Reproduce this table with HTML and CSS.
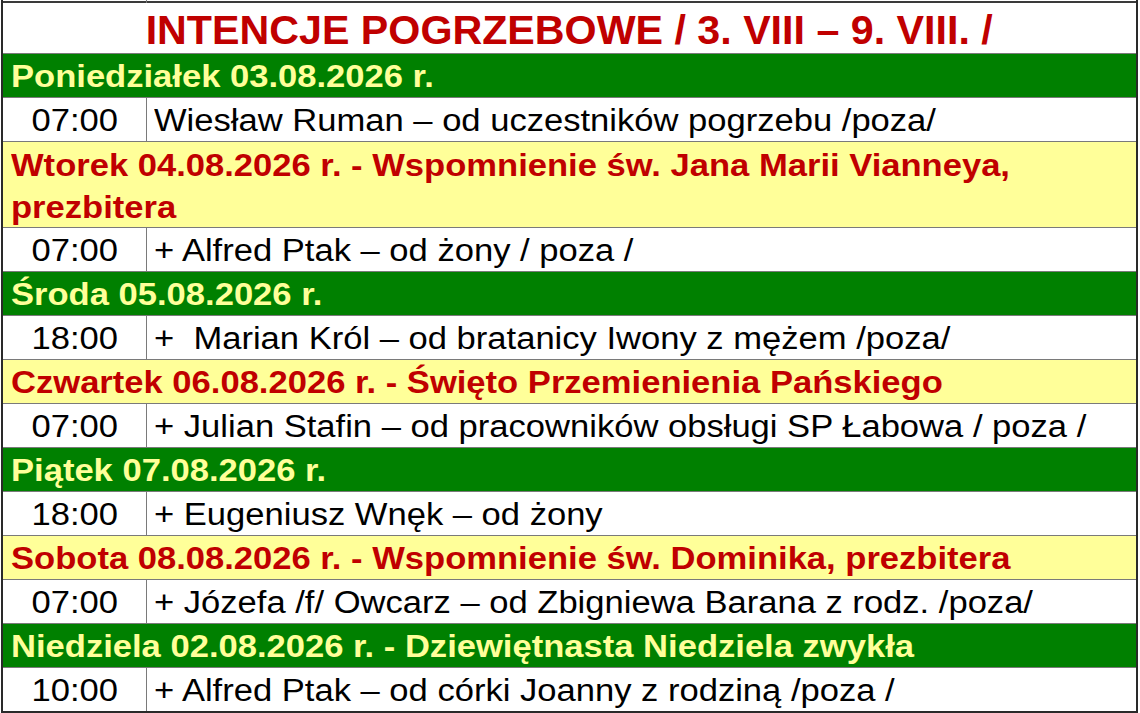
FILE: index.html
```html
<!DOCTYPE html>
<html lang="pl">
<head>
<meta charset="utf-8">
<title>Intencje pogrzebowe</title>
<link rel="stylesheet" href="styles.css">
</head>
<body>
<div class="sheet">
  <div class="row mass cut"><div class="time"></div><div class="text"></div></div>
  <div class="row title"><span class="st">INTENCJE POGRZEBOWE / 3. VIII – 9. VIII. /</span></div>
  <div class="row day green"><span class="s">Poniedziałek 03.08.2026 r.</span></div>
  <div class="row mass"><div class="time"><span class="sc">07:00</span></div><div class="text"><span class="s">Wiesław Ruman – od uczestników pogrzebu /poza/</span></div></div>
  <div class="row day yellow two"><span class="s line">Wtorek 04.08.2026 r. - Wspomnienie św. Jana Marii Vianneya,</span><span class="s line">prezbitera</span></div>
  <div class="row mass"><div class="time"><span class="sc">07:00</span></div><div class="text"><span class="s">+ Alfred Ptak – od żony / poza /</span></div></div>
  <div class="row day green"><span class="s">Środa 05.08.2026 r.</span></div>
  <div class="row mass"><div class="time"><span class="sc">18:00</span></div><div class="text"><span class="s">+&nbsp; Marian Król – od bratanicy Iwony z mężem /poza/</span></div></div>
  <div class="row day yellow"><span class="s">Czwartek 06.08.2026 r. - Święto Przemienienia Pańskiego</span></div>
  <div class="row mass"><div class="time"><span class="sc">07:00</span></div><div class="text"><span class="s">+ Julian Stafin – od pracowników obsługi SP Łabowa / poza /</span></div></div>
  <div class="row day green"><span class="s">Piątek 07.08.2026 r.</span></div>
  <div class="row mass"><div class="time"><span class="sc">18:00</span></div><div class="text"><span class="s">+ Eugeniusz Wnęk – od żony</span></div></div>
  <div class="row day yellow"><span class="s">Sobota 08.08.2026 r. - Wspomnienie św. Dominika, prezbitera</span></div>
  <div class="row mass"><div class="time"><span class="sc">07:00</span></div><div class="text"><span class="s">+ Józefa /f/ Owcarz – od Zbigniewa Barana z rodz. /poza/</span></div></div>
  <div class="row day green"><span class="s">Niedziela 02.08.2026 r. - Dziewiętnasta Niedziela zwykła</span></div>
  <div class="row mass last"><div class="time"><span class="sc">10:00</span></div><div class="text"><span class="s">+ Alfred Ptak – od córki Joanny z rodziną /poza /</span></div></div>
</div>
</body>
</html>
```
FILE: styles.css
```css
html, body {
  margin: 0;
  padding: 0;
  background: #ffffff;
}
body {
  font-family: "Liberation Sans", Arial, sans-serif;
  padding-left: 1px;
}
.sheet {
  width: 1137px;
  box-sizing: border-box;
  border-left: 2px solid #2a2a2a;
  border-right: 2px solid #2a2a2a;
  border-bottom: 2px solid #2a2a2a;
  display: flex;
  flex-direction: column;
}
.row {
  box-sizing: border-box;
  border-bottom: 1px solid #7a7a7a;
  flex: none;
}
.s {
  display: inline-block;
  white-space: nowrap;
  transform: scaleX(1.115);
  transform-origin: left center;
}
.sc {
  display: inline-block;
  white-space: nowrap;
  transform: scaleX(1.115);
  transform-origin: center center;
}
.st {
  display: inline-block;
  white-space: nowrap;
  transform: scaleX(1.03);
  transform-origin: center center;
}
.title {
  height: 51px;
  text-align: center;
  color: #c00000;
  font-weight: bold;
  font-size: 40px;
  line-height: 46px;
  padding-top: 4px;
}
.day {
  height: 44px;
  padding: 3px 6px 0 8px;
  font-weight: bold;
  font-size: 31px;
  line-height: 40px;
}
.day.two {
  height: 86px;
  display: flex;
  flex-direction: column;
  align-items: flex-start;
  line-height: 41.5px;
}
.green {
  background: #008000;
  color: #ffff99;
}
.yellow {
  background: #ffff99;
  color: #c00000;
}
.mass {
  display: grid;
  grid-template-columns: 144px 1fr;
  height: 44px;
  font-size: 31px;
  color: #000;
}
.mass.last {
  height: 43px;
  border-bottom: none;
}
.mass.cut {
  height: 3px;
  border-bottom: 2px solid #3a3a3a;
}
.time {
  border-right: 1px solid #7a7a7a;
  text-align: center;
  line-height: 40px;
  padding-top: 3px;
}
.text {
  padding-left: 7px;
  line-height: 40px;
  padding-top: 3px;
  white-space: nowrap;
}
```
